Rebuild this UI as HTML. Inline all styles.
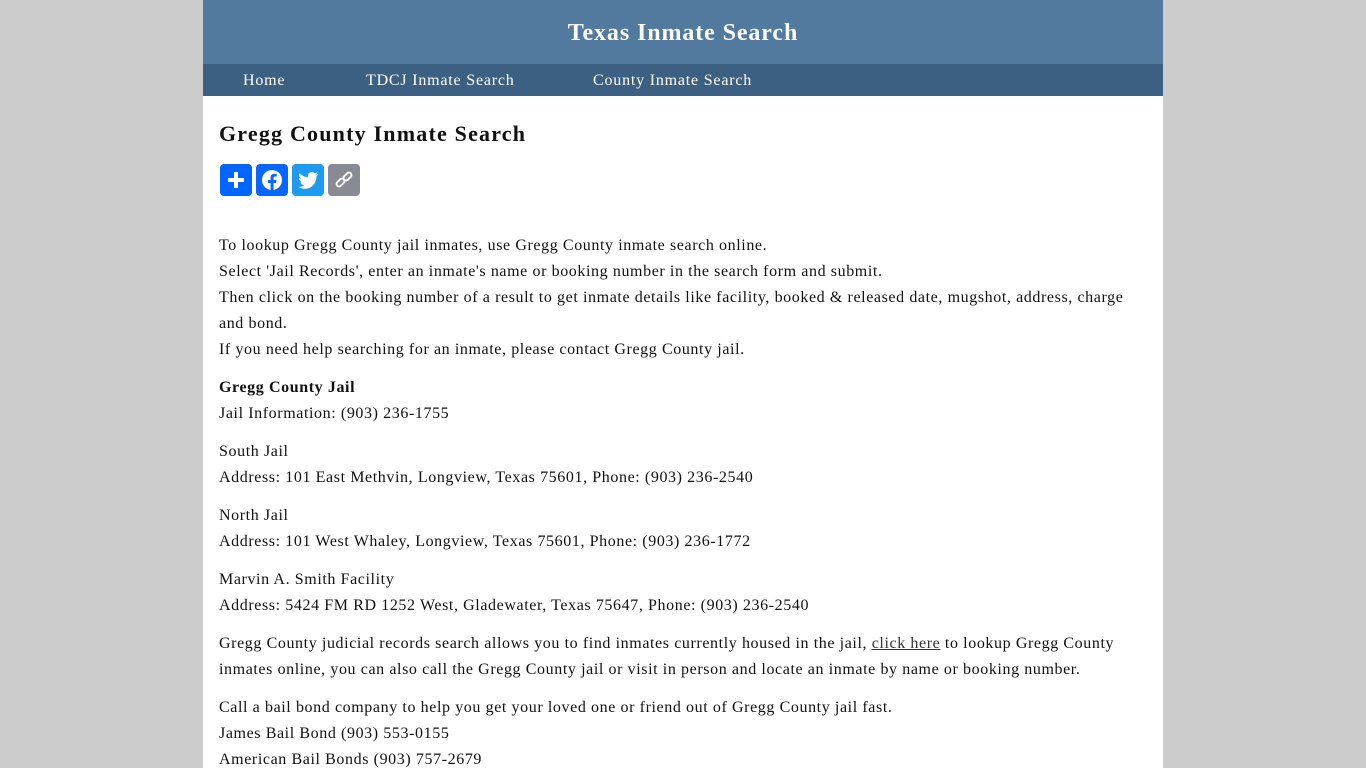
<!DOCTYPE html>
<html><head><meta charset="utf-8"><style>
body{margin:0;background:#cccccc;font-family:"Liberation Serif",serif;}
.wrap{width:960px;margin:0 auto;background:#fff;height:768px;overflow:hidden;position:relative}
.hd{background:#52799e;height:64px;color:#fff;text-align:center;font-weight:bold;font-size:24px;line-height:66px;letter-spacing:0.9px}
.nav{background:#3c6082;height:32px;line-height:33px;color:#fff;font-size:16px;letter-spacing:0.8px;position:relative}
.nav span{position:absolute;top:0}
.ct{padding:0 16px;font-size:16px;color:#111;letter-spacing:0.6px;line-height:26px}
h1{font-size:22px;margin:0;position:absolute;top:119px;line-height:30px;letter-spacing:1.2px}
.icons{position:absolute;top:164px;display:flex;gap:4px}
.icons div{width:32px;height:32px;border-radius:4px;display:flex;align-items:center;justify-content:center}
p{margin:0 0 12px}
a{color:#333}
</style></head><body><div class="wrap">
<div class="hd">Texas Inmate Search</div>
<div class="nav"><span style="left:40px">Home</span><span style="left:163px">TDCJ Inmate Search</span><span style="left:390px">County Inmate Search</span></div>
<div class="ct">
<h1>Gregg County Inmate Search</h1>
<div class="icons" style="left:17px">
<div style="background:#0166ff"><svg width="22" height="22"><path d="M11 3v16M3 11h16" stroke="#fff" stroke-width="4"/></svg></div>
<div style="background:#0866ff"><svg width="24" height="24" viewBox="0 0 24 24"><circle cx="12" cy="12" r="10" fill="#fff"/><path d="M13.5 23v-8h2.6l.4-3h-3v-2c0-.9.3-1.5 1.6-1.5h1.6V5.8c-.3 0-1.2-.1-2.3-.1-2.3 0-3.8 1.4-3.8 3.9V12H8v3h2.6v8z" fill="#0866ff"/></svg></div>
<div style="background:#1d9bf0"><svg width="24" height="24" viewBox="0 0 24 24"><path d="M22 5.9c-.7.3-1.5.5-2.3.6.8-.5 1.5-1.3 1.8-2.2-.8.5-1.7.8-2.6 1-1.6-1.7-4.3-1.7-5.9 0-1 1-1.4 2.5-1.1 3.9C8.6 9 5.6 7.5 3.6 5c-1.1 1.9-.5 4.3 1.3 5.5-.7 0-1.3-.2-1.9-.5 0 2 1.4 3.7 3.3 4.1-.6.2-1.2.2-1.9.1.5 1.7 2.1 2.9 3.9 2.9-1.7 1.3-3.9 2-6.1 1.8 1.9 1.2 4.1 1.9 6.4 1.9 7.6 0 11.8-6.4 11.8-11.8v-.5c.8-.6 1.5-1.3 2-2.2z" fill="#fff"/></svg></div>
<div style="background:#888a94"><svg width="22" height="22" viewBox="0 0 22 22"><g fill="none" stroke="#fff" stroke-width="2"><rect x="3" y="11" width="9" height="5" rx="2.5" transform="rotate(-45 7.5 13.5)"/><rect x="10" y="5" width="9" height="5" rx="2.5" transform="rotate(-45 14.5 7.5)"/></g></svg></div>
</div>
<div style="height:137px"></div>
<p>To lookup Gregg County jail inmates, use Gregg County inmate search online.<br>Select 'Jail Records', enter an inmate's name or booking number in the search form and submit.<br>Then click on the booking number of a result to get inmate details like facility, booked &amp; released date, mugshot, address, charge and bond.<br>If you need help searching for an inmate, please contact Gregg County jail.</p>
<p><b>Gregg County Jail</b><br>Jail Information: (903) 236-1755</p>
<p>South Jail<br>Address: 101 East Methvin, Longview, Texas 75601, Phone: (903) 236-2540</p>
<p>North Jail<br>Address: 101 West Whaley, Longview, Texas 75601, Phone: (903) 236-1772</p>
<p>Marvin A. Smith Facility<br>Address: 5424 FM RD 1252 West, Gladewater, Texas 75647, Phone: (903) 236-2540</p>
<p>Gregg County judicial records search allows you to find inmates currently housed in the jail, <a href="#">click here</a> to lookup Gregg County inmates online, you can also call the Gregg County jail or visit in person and locate an inmate by name or booking number.</p>
<p>Call a bail bond company to help you get your loved one or friend out of Gregg County jail fast.<br>James Bail Bond (903) 553-0155<br>American Bail Bonds (903) 757-2679</p>
</div></div></body></html>
